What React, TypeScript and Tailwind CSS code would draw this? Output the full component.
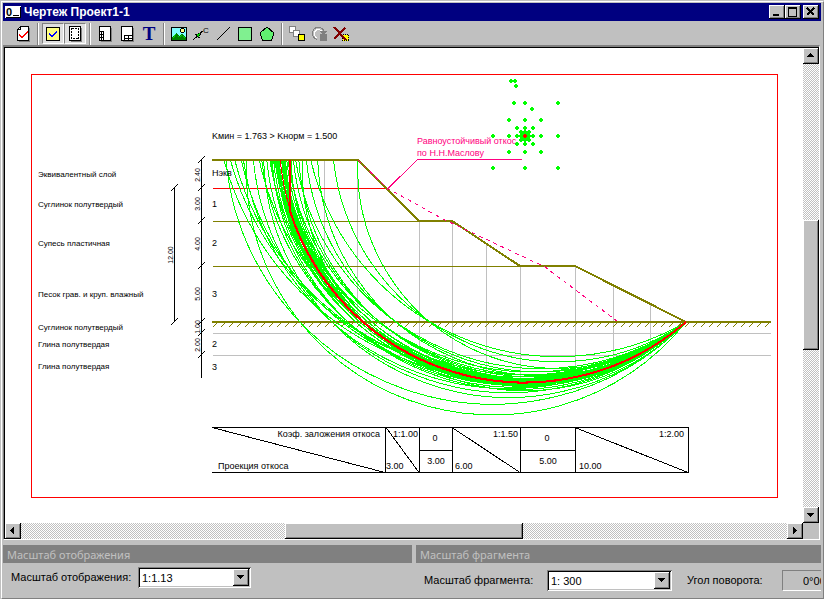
import type { ReactNode } from "react";

const raised =
  "bg-[#c0c0c0] shadow-[inset_-1px_-1px_#000,inset_1px_1px_#fff,inset_-2px_-2px_#808080]";
const dither =
  "bg-[conic-gradient(#fff_25%,#c0c0c0_0_50%,#fff_0_75%,#c0c0c0_0)] bg-[length:2px_2px]";

/* ---------- toolbar ---------- */

function Icon({ children }: { children: ReactNode }) {
  return (
    <svg width="16" height="16" viewBox="0 0 16 16" fill="none" shapeRendering="crispEdges">
      {children}
    </svg>
  );
}

function Sheet() {
  return (
    <>
      <path d="M4 15.5H14.5V2" stroke="#808080" />
      <path d="M5.5 .5H13.5V14.5H2.5V3.5Z" fill="#fff" stroke="#000" />
      <path d="M3 3.5H5.5V1" stroke="#000" />
    </>
  );
}

const icons = {
  check: (
    <Icon>
      <Sheet />
      <path d="M4 8L7 11L13 5M4 9L7 12L13 6" stroke="#f00" />
    </Icon>
  ),
  select: (
    <Icon>
      <rect x="1.5" y="1.5" width="13" height="13" fill="#ffff80" stroke="#000" />
      <path d="M4 7L7 10L12 5M4 8L7 11L12 6" stroke="#00f" />
    </Icon>
  ),
  frame: (
    <Icon>
      <path d="M4 15.5H14.5V2" stroke="#808080" />
      <rect x="2.5" y=".5" width="11" height="14" fill="#fff" stroke="#000" />
      <rect x="4.5" y="2.5" width="7" height="10" stroke="#000" strokeDasharray="2 1" />
    </Icon>
  ),
  sideTable: (
    <Icon>
      <path d="M4 15.5H14.5V2" stroke="#808080" />
      <rect x="2.5" y=".5" width="11" height="14" fill="#fff" stroke="#000" />
      <path d="M6.5 5V14M4.5 5V14M2 5.5H7M2 8.5H7M2 11.5H7" stroke="#000" />
    </Icon>
  ),
  bottomTable: (
    <Icon>
      <path d="M4 15.5H14.5V2" stroke="#808080" />
      <rect x="2.5" y=".5" width="11" height="14" fill="#fff" stroke="#000" />
      <path d="M5 9.5H13M5 12.5H13M5.5 9V14M9.5 9V14" stroke="#000" />
    </Icon>
  ),
  text: (
    <span className="font-['Liberation_Serif',serif] text-[19px] leading-[21px] font-bold text-[#000080]">T</span>
  ),
  picture: (
    <Icon>
      <rect x=".5" y="1.5" width="15" height="13" fill="#80ffff" stroke="#000" />
      <path d="M1 14V11L5 7L8 10L11 8L15 12V14Z" fill="#008000" />
      <path d="M2 12L5 8L9 12M9 11L11 9L14 12" stroke="#00e000" strokeDasharray="1 1" />
      <circle cx="11.5" cy="4.5" r="2" fill="#ff8" stroke="#000" />
    </Icon>
  ),
  pointer: (
    <Icon>
      <path d="M0 14L10 5" stroke="#000" />
      <path d="M2 9L8 6L6 12L4 10Z" fill="#0c0" stroke="#000" strokeDasharray="2 1" />
      <text x="10" y="7" className="fill-black font-['Liberation_Sans',sans-serif] text-[8px]">
        C
      </text>
    </Icon>
  ),
  line: (
    <Icon>
      <path d="M1.5 14.5L14.5 1.5" stroke="#000" />
    </Icon>
  ),
  rect: (
    <Icon>
      <rect x="1.5" y="1.5" width="13" height="13" fill="#80f090" stroke="#000" />
    </Icon>
  ),
  polygon: (
    <Icon>
      <path d="M8 1L15 7L12.5 14.5H3.5L1 7Z" fill="#60f070" stroke="#000" />
    </Icon>
  ),
  order: (
    <Icon>
      <rect x=".5" y=".5" width="6" height="6" fill="#fff" stroke="#808080" />
      <rect x="4.5" y="4.5" width="6" height="6" fill="#fff" stroke="#808080" />
      <rect x="9.5" y="8.5" width="6" height="6" fill="#ff0" stroke="#000" />
    </Icon>
  ),
  rotate: (
    <Icon>
      <path d="M6 13.5C-1 11 1 1.500 7 1.500C11 1.500 13 4 13 7" stroke="#808080" />
      <path d="M6 12C2 10 3 4 7 3.500C10 3.500 11 5 11 7" stroke="#fff" />
      <path d="M9 5H16L12.5 9Z" fill="#808080" />
      <rect x="9" y="8" width="7" height="7" fill="#808080" />
    </Icon>
  ),
  remove: (
    <Icon>
      <rect x="9.5" y="8.5" width="6" height="6" fill="#ff0" stroke="#000" strokeDasharray="1 1" />
      <path d="M1 1L13 14M12 2L1 13" stroke="#800000" strokeWidth="2" />
    </Icon>
  ),
};

const toolGroups = [
  [{ name: "Проверка", icon: icons.check }],
  [
    { name: "Выбор", icon: icons.select, pressed: true },
    { name: "Рамка", icon: icons.frame, pressed: true },
  ],
  [
    { name: "Боковик", icon: icons.sideTable },
    { name: "Штамп", icon: icons.bottomTable },
    { name: "Текст", icon: icons.text },
  ],
  [
    { name: "Рисунок", icon: icons.picture },
    { name: "Выноска", icon: icons.pointer },
    { name: "Линия", icon: icons.line },
    { name: "Прямоугольник", icon: icons.rect },
    { name: "Многоугольник", icon: icons.polygon },
  ],
  [
    { name: "Порядок", icon: icons.order },
    { name: "Повернуть", icon: icons.rotate },
    { name: "Удалить", icon: icons.remove },
  ],
] as { name: string; icon: ReactNode; pressed?: boolean }[][];

function Toolbar() {
  return (
    <div className="flex h-6 shrink-0 items-center pt-px pl-[9px]">
      {toolGroups.map((group, i) => (
        <div key={i} className="flex items-center">
          {i > 0 && <span className="mx-[3px] h-[22px] w-0.5 border-r border-l border-r-white border-l-[#808080]" />}
          {group.map((tool) => (
            <button
              key={tool.name}
              aria-label={tool.name}
              aria-pressed={tool.pressed}
              className={
                tool.pressed
                  ? "flex h-[21px] w-[22px] items-center justify-center border border-t-[#808080] border-r-white border-b-white border-l-[#808080] bg-[#e0e0e0]"
                  : "flex h-[21px] w-[22px] items-center justify-center"
              }
            >
              {tool.icon}
            </button>
          ))}
        </div>
      ))}
    </div>
  );
}

/* ---------- drawing ---------- */

const toe = { x: 686, y: 322 };
const top = 160;
const main = { x: 525, y: 136 };

const centres: [number, number][] = [
  [511, 81],
  [515, 81],
  [516, 86],
  [514, 103],
  [532, 109],
  [525, 103],
  [558, 103],
  [493, 136],
  [558, 136],
  [493, 168],
  [525, 168],
  [558, 168],
];
for (const step of [16, 8, 4, 2]) {
  for (const dx of [-step, 0, step]) {
    for (const dy of [-step, 0, step]) {
      if (dx || dy) centres.push([main.x + dx, main.y + dy]);
    }
  }
}

function slipArc(cx: number, cy: number) {
  const r = Math.hypot(toe.x - cx, toe.y - cy);
  const x = cx - Math.sqrt(r * r - (top - cy) ** 2);
  return `M${x.toFixed(1)} ${top}A${r.toFixed(1)} ${r.toFixed(1)} 0 0 0 ${toe.x} ${toe.y}`;
}

function slipY(x: number) {
  const r = Math.hypot(toe.x - main.x, toe.y - main.y);
  return Math.round(main.y + Math.sqrt(r * r - (x - main.x) ** 2));
}

const slices = [
  [324, 160],
  [357, 160],
  [419, 221],
  [452, 221],
  [486, 244],
  [520, 266],
  [575, 266],
  [613, 285],
  [650, 304],
];

const soils = [
  { y: 177, name: "Эквивалентный слой" },
  { y: 207, name: "Суглинок полутвердый" },
  { y: 246, name: "Супесь пластичная" },
  { y: 297, name: "Песок грав. и круп. влажный" },
  { y: 330, name: "Суглинок полутвердый" },
  { y: 347, name: "Глина полутвердая" },
  { y: 369, name: "Глина полутвердая" },
];

const layers = [
  { y: 176, label: "Нэкв" },
  { y: 207, label: "1" },
  { y: 246, label: "2" },
  { y: 297, label: "3" },
  { y: 347, label: "2" },
  { y: 370, label: "3" },
];

const depths = [
  { x: 200, y: 175, value: "2.40" },
  { x: 200, y: 204, value: "3.00" },
  { x: 200, y: 244, value: "4.00" },
  { x: 200, y: 294, value: "5.00" },
  { x: 200, y: 327, value: "1.00" },
  { x: 200, y: 345, value: "2.00" },
  { x: 173, y: 255, value: "12.00" },
];

const ticks = [
  [201, 160],
  [201, 188],
  [201, 221],
  [201, 266],
  [201, 322],
  [201, 333],
  [201, 355],
  [174, 188],
  [174, 322],
];

const cells = [
  { x: 380, y: 437, anchor: "end", label: "Коэф. заложения откоса" },
  { x: 218, y: 469, anchor: "start", label: "Проекция откоса" },
  { x: 418, y: 437, anchor: "end", label: "1:1.00" },
  { x: 386, y: 469, anchor: "start", label: "3.00" },
  { x: 435, y: 441, anchor: "middle", label: "0" },
  { x: 436, y: 464, anchor: "middle", label: "3.00" },
  { x: 518, y: 437, anchor: "end", label: "1:1.50" },
  { x: 455, y: 469, anchor: "start", label: "6.00" },
  { x: 547, y: 441, anchor: "middle", label: "0" },
  { x: 548, y: 464, anchor: "middle", label: "5.00" },
  { x: 684, y: 437, anchor: "end", label: "1:2.00" },
  { x: 579, y: 469, anchor: "start", label: "10.00" },
] as const;

const hatches = Array.from({ length: 70 }, (_, i) => `M${213 + i * 8} 327l4 -4`).join("");

function Drawing() {
  return (
    <svg
      width="798"
      height="475"
      viewBox="5 48 798 475"
      fill="none"
      shapeRendering="crispEdges"
      className="block shrink-0 font-['Liberation_Sans',Arial,sans-serif] text-[9px]"
    >
      <rect x="31.5" y="74.5" width="746" height="423" stroke="#f00" />

      {/* depth scales */}
      <path d="M201.5 159V378M174.5 188V322" stroke="#000" />
      <path d={ticks.map(([x, y]) => `M${x - 3} ${y + 3}l7 -7`).join("")} stroke="#000" />
      {depths.map((d) => (
        <text
          key={d.y}
          x={d.x}
          y={d.y}
          textAnchor="middle"
          transform={`rotate(-90 ${d.x} ${d.y})`}
          className="fill-black text-[7px]"
        >
          {d.value}
        </text>
      ))}
      {soils.map((s) => (
        <text key={s.y} x="38" y={s.y} className="fill-black text-[8px]">
          {s.name}
        </text>
      ))}

      {/* slices and strata */}
      <path d="M213 333.5H771M213 355.5H771" stroke="#c0c0c0" />
      <path d={slices.map(([x, y]) => `M${x + 0.5} ${y}V${slipY(x)}`).join("")} stroke="#c0c0c0" />
      <path d={hatches} stroke="#808000" />
      <path d="M213 221.5H419M213 266.5H520" stroke="#808000" />
      <path d="M212 322H771" stroke="#808000" strokeWidth="2" />
      <path d="M213 188.5H387" stroke="#f00" />

      {/* trial slip surfaces */}
      <path d={centres.map(([x, y]) => slipArc(x, y)).join("")} stroke="#0f0" />
      <path d="M212 160H358L419 221H452L520 266H575L686 322" stroke="#808000" strokeWidth="2" />
      <path d={slipArc(main.x, main.y)} stroke="#f00" />
      <path d="M290 160V211A246 246 0 0 0 686 322" stroke="#f00" strokeWidth="2" />

      {/* equal-stability slope */}
      <path d="M358 160L387 188L443 219L545 267L617 321" stroke="#ff0080" strokeDasharray="4 4" />
      <path d="M387 189.5L417.5 159.5H522" stroke="#ff0080" />
      <g className="fill-[#ff0080]">
        <text x="417" y="144">
          Равноустойчивый откос
        </text>
        <text x="417" y="156">
          по Н.Н.Маслову
        </text>
      </g>

      {centres.map(([x, y]) => (
        <path key={`${x} ${y}`} d={`M${x - 2} ${y - 1}h1v-1h2v1h1v2h-1v1h-2v-1h-1z`} fill="#0f0" />
      ))}
      <path d="M523 135h1v-1h2v1h1v2h-1v1h-2v-1h-1z" fill="#f00" />

      <text x="212" y="139" className="fill-black">
        Kмин = 1.763 &gt; Kнорм = 1.500
      </text>
      {layers.map((l) => (
        <text key={l.y} x="212" y={l.y} className="fill-black">
          {l.label}
        </text>
      ))}

      {/* slope ratios */}
      <path
        d="M212 427.5H688.5V472.5H212M385.5 427V472M419.5 427V472M452.5 427V472M520.5 427V472M575.5 427V472M419 450.5H452M520 450.5H575M212 427.5L385 472.5M386 427.5L419 472.5M452 427.5L520 472.5M575 427.5L688 472.5"
        stroke="#000"
      />
      {cells.map((c) => (
        <text key={`${c.x} ${c.y}`} x={c.x} y={c.y} textAnchor={c.anchor} className="fill-black">
          {c.label}
        </text>
      ))}
    </svg>
  );
}

/* ---------- window parts ---------- */

const arrows = {
  up: "M4 9h7v-1h-1v-1h-1v-1h-1v-1h-1v1h-1v1h-1v1h-1z",
  down: "M4 6h7v1h-1v1h-1v1h-1v1h-1v-1h-1v-1h-1v-1h-1z",
  left: "M9 4v7h-1v-1h-1v-1h-1v-1h-1v-1h1v-1h1v-1h1v-1z",
  right: "M6 4v7h1v-1h1v-1h1v-1h1v-1h-1v-1h-1v-1h-1v-1z",
};

function Arrow({ dir }: { dir: keyof typeof arrows }) {
  return (
    <svg width="16" height="16" viewBox="0 0 16 16" shapeRendering="crispEdges">
      <path d={arrows[dir]} fill="#000" />
    </svg>
  );
}

function ScrollButton({ dir, label }: { dir: keyof typeof arrows; label: string }) {
  return (
    <button aria-label={label} className={`size-4 shrink-0 ${raised}`}>
      <Arrow dir={dir} />
    </button>
  );
}

function TitleButton({ label, d, sw }: { label: string; d: string; sw: number }) {
  return (
    <button aria-label={label} className={`h-3.5 w-4 ${raised}`}>
      <svg width="16" height="14" viewBox="0 0 16 14" fill="none" shapeRendering="crispEdges">
        <path d={d} stroke="#000" strokeWidth={sw} />
      </svg>
    </button>
  );
}

function TitleBar() {
  return (
    <header className="flex h-[18px] shrink-0 items-center bg-[#000080] pr-0.5 pl-0.5">
      <svg width="16" height="16" viewBox="0 0 16 16" shapeRendering="crispEdges">
        <rect y="2" width="16" height="12" fill="#fff" />
        <path d="M1 13h14M15.5 3v11" stroke="#000" />
        <text x="1" y="12" className="fill-black font-['Liberation_Sans',sans-serif] text-[11px] font-bold">
          0
        </text>
        <rect x="8" y="11" width="6" height="1" />
      </svg>
      <h1 className="flex-1 pl-[3px] font-['Liberation_Sans',Arial,sans-serif] text-[12px] leading-[18px] font-bold text-white">
        Чертеж Проект1-1
      </h1>
      <TitleButton label="Свернуть" d="M4 10H10" sw={2} />
      <TitleButton label="Развернуть" d="M3 3H12M3.5 2V11.5H11.5V2M3 2.5H12" sw={1} />
      <span className="w-0.5" />
      <TitleButton label="Закрыть" d="M4 3L11 10M11 3L4 10" sw={2} />
    </header>
  );
}

function Combo({ id, value, className }: { id: string; value: string; className: string }) {
  return (
    <div className={`relative h-[21px] shrink-0 ${className}`}>
      <select
        id={id}
        defaultValue={value}
        className="h-full w-full appearance-none rounded-none bg-white pl-1 text-[11px] leading-4 text-black shadow-[inset_1px_1px_#808080,inset_-1px_-1px_#fff,inset_2px_2px_#000,inset_-2px_-2px_#c0c0c0]"
      >
        <option>{value}</option>
      </select>
      <span className={`pointer-events-none absolute top-0.5 right-0.5 h-[17px] w-4 ${raised}`}>
        <Arrow dir="down" />
      </span>
    </div>
  );
}

function PanelTitle({ children }: { children: string }) {
  return (
    <h2 className="h-[18px] bg-[#808080] pl-1 font-['Noto_Sans',sans-serif] text-[11px] leading-5 whitespace-nowrap text-[#c0c0c0]">
      {children}
    </h2>
  );
}

export default function App() {
  return (
    <div className="h-screen w-full bg-[#c0c0c0] pt-px pl-px font-['Liberation_Sans',Arial,sans-serif] text-black">
      <div className="flex h-full flex-col overflow-hidden border border-t-white border-r-[#808080] border-b-[#808080] border-l-white pt-px pr-0.5 pb-px pl-px">
        <TitleBar />
        <Toolbar />

        <main className="mr-px flex min-h-0 flex-1 flex-col border border-t-2 border-t-[#808080] border-r-white border-b-white border-l-[#808080]">
          <div className="flex min-h-0 flex-1">
            <div className="min-w-0 flex-1 overflow-hidden border-t border-l border-black bg-white">
              <Drawing />
            </div>
            <div className={`flex w-4 shrink-0 flex-col border-t border-black ${dither}`}>
              <ScrollButton dir="up" label="Вверх" />
              <div className="grow-[156]" />
              <div className={`grow-[130] ${raised}`} />
              <div className="grow-[157]" />
              <ScrollButton dir="down" label="Вниз" />
            </div>
          </div>
          <div className="flex h-4 shrink-0">
            <div className={`flex min-w-0 flex-1 border-l border-black ${dither}`}>
              <ScrollButton dir="left" label="Влево" />
              <div className="grow-[264]" />
              <div className={`grow-[238] ${raised}`} />
              <div className="grow-[264]" />
              <ScrollButton dir="right" label="Вправо" />
            </div>
            <div className="w-4 shrink-0" />
          </div>
        </main>

        <footer className="mt-[5px] flex shrink-0 gap-1 text-[11px] leading-4">
          <section className="w-1/2 shrink-0">
            <PanelTitle>Масштаб отображения</PanelTitle>
            <div className="flex h-[34px] items-start pt-1 pl-2">
              <label htmlFor="view" className="w-[127px] shrink-0 pt-0.5 whitespace-nowrap">
                Масштаб отображения:
              </label>
              <Combo id="view" value="1:1.13" className="w-[113px]" />
            </div>
          </section>
          <section className="min-w-0 flex-1 overflow-hidden">
            <PanelTitle>Масштаб фрагмента</PanelTitle>
            <div className="flex h-[34px] items-start pt-[7px] pl-2">
              <label htmlFor="part" className="w-[123px] shrink-0 pt-0.5 whitespace-nowrap">
                Масштаб фрагмента:
              </label>
              <Combo id="part" value="1: 300" className="w-[125px]" />
              <label htmlFor="angle" className="ml-[15px] w-[95px] shrink-0 pt-0.5 whitespace-nowrap">
                Угол поворота:
              </label>
              <input
                id="angle"
                readOnly
                value={"0°00'"}
                className="h-[21px] w-20 shrink-0 rounded-none border border-t-[#808080] border-r-white border-b-white border-l-[#808080] bg-[#c0c0c0] pl-5"
              />
            </div>
          </section>
        </footer>
      </div>
    </div>
  );
}
